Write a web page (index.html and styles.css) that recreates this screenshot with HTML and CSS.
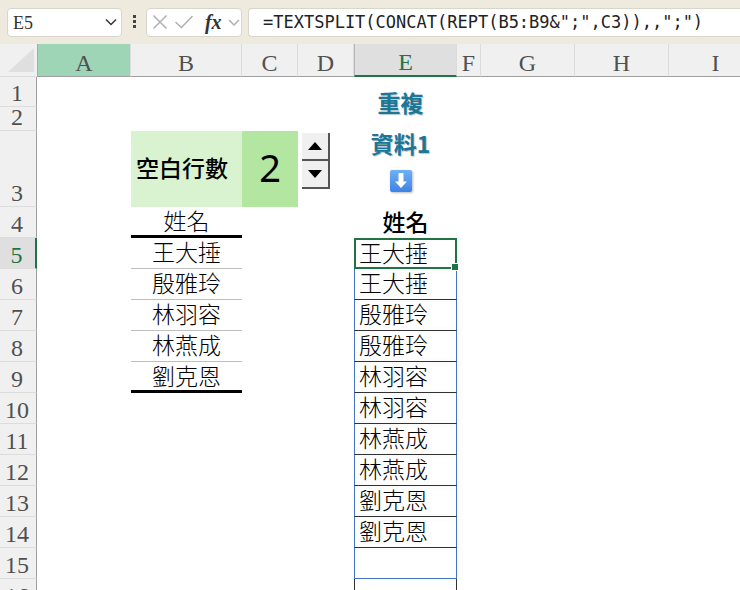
FILE: index.html
```
<!DOCTYPE html>
<html lang="zh-Hant">

<head>
    <meta charset="UTF-8">
    <meta name="viewport" content="width=device-width, initial-scale=1.0">
    <title>TEXTSPLIT</title>
    <link rel="stylesheet" href="styles.css">
</head>

<body>
    <div class="formula-bar">
        <div class="box name-box">
            <input type="text" value="E5" aria-label="Name box">
            <button type="button" aria-label="Names">
                <svg width="14" height="14" viewBox="0 0 14 14"><path d="M2 4.500l5 5 5-5" /></svg>
            </button>
        </div>
        <svg class="dots" width="4" height="16" viewBox="0 0 4 16">
            <rect x="0" y="1" width="3" height="3" />
            <rect x="0" y="6" width="3" height="3" />
            <rect x="0" y="11" width="3" height="3" />
        </svg>
        <div class="box tools">
            <button type="button" aria-label="Cancel">
                <svg width="16" height="16" viewBox="0 0 16 16"><path d="M1.500 1.500l13 13M14.500 1.500l-13 13" /></svg>
            </button>
            <button type="button" aria-label="Enter">
                <svg width="20" height="16" viewBox="0 0 20 16"><path d="M1.500 8l6 5.500L18.500 2" /></svg>
            </button>
            <button type="button" class="fx" aria-label="Insert function">fx</button>
            <button type="button" aria-label="More functions">
                <svg width="12" height="14" viewBox="0 0 12 14"><path d="M1 5l5 5 5-5" /></svg>
            </button>
        </div>
        <input type="text" class="box formula" aria-label="Formula" value="=TEXTSPLIT(CONCAT(REPT(B5:B9&amp;&quot;;&quot;,C3)),,&quot;;&quot;)">
    </div>

    <div class="sheet">
        <table>
            <colgroup>
                <col class="col-num">
                <col class="col-wide">
                <col class="col-b">
                <col class="col-c">
                <col class="col-c">
                <col class="col-e">
                <col class="col-f">
                <col class="col-wide">
                <col class="col-wide">
                <col class="col-wide">
            </colgroup>
            <thead>
                <tr>
                    <th class="corner"><svg width="26" height="24" viewBox="0 0 26 24"><path d="M26 0v24H0z" /></svg></th>
                    <th class="green">A</th>
                    <th>B</th>
                    <th>C</th>
                    <th>D</th>
                    <th class="active">E</th>
                    <th>F</th>
                    <th>G</th>
                    <th>H</th>
                    <th>I</th>
                </tr>
            </thead>
            <tbody>
                <tr class="row-1">
                    <th>1</th>
                    <td></td><td></td><td></td><td></td>
                    <td class="title" rowspan="3">
                        <p>重複</p>
                        <p>資料1</p>
                        <svg width="24" height="24" viewBox="0 0 24 24">
                            <defs>
                                <linearGradient id="blue" x1="0" y1="0" x2="0" y2="1">
                                    <stop offset="0" stop-color="#6fb0f5" />
                                    <stop offset="1" stop-color="#3d83e6" />
                                </linearGradient>
                            </defs>
                            <rect x="1" y="1" width="22" height="22" rx="2" fill="url(#blue)" />
                            <path d="M9.500 5q0-1 1-1h3q1 0 1 1v7.500h3.500L12 19l-6-6.500h3.500z" fill="#fff" />
                        </svg>
                    </td>
                </tr>
                <tr class="row-2"><th>2</th></tr>
                <tr class="row-3">
                    <th>3</th>
                    <td></td>
                    <td class="label">空白行數</td>
                    <td class="count">2</td>
                    <td class="spin">
                        <button type="button" aria-label="Increase"><svg width="14" height="8" viewBox="0 0 14 8"><path d="M7 0l7 8H0z" /></svg></button>
                        <button type="button" aria-label="Decrease"><svg width="14" height="8" viewBox="0 0 14 8"><path d="M7 8L0 0h14z" /></svg></button>
                    </td>
                </tr>
                <tr><th>4</th><td></td><td class="name head">姓名</td><td></td><td></td><td class="result-head">姓名</td></tr>
                <tr><th class="active">5</th><td></td><td class="name">王大捶</td><td></td><td></td><td class="result selected">王大捶</td></tr>
                <tr><th>6</th><td></td><td class="name">殷雅玲</td><td></td><td></td><td class="result">王大捶</td></tr>
                <tr><th>7</th><td></td><td class="name">林羽容</td><td></td><td></td><td class="result">殷雅玲</td></tr>
                <tr><th>8</th><td></td><td class="name">林燕成</td><td></td><td></td><td class="result">殷雅玲</td></tr>
                <tr><th>9</th><td></td><td class="name last">劉克恩</td><td></td><td></td><td class="result">林羽容</td></tr>
                <tr><th>10</th><td></td><td></td><td></td><td></td><td class="result">林羽容</td></tr>
                <tr><th>11</th><td></td><td></td><td></td><td></td><td class="result">林燕成</td></tr>
                <tr><th>12</th><td></td><td></td><td></td><td></td><td class="result">林燕成</td></tr>
                <tr><th>13</th><td></td><td></td><td></td><td></td><td class="result">劉克恩</td></tr>
                <tr><th>14</th><td></td><td></td><td></td><td></td><td class="result">劉克恩</td></tr>
                <tr><th>15</th><td></td><td></td><td></td><td></td><td class="result end"></td></tr>
                <tr><th>16</th><td></td><td></td><td></td><td></td><td class="after"></td></tr>
            </tbody>
        </table>
    </div>
</body>

</html>
```
FILE: styles.css
```
* {
    box-sizing: border-box;
}

body {
    margin: 0;
    height: 100vh;
    display: flex;
    flex-direction: column;
    overflow: hidden;
    background-color: #fff;
    font-family: "Noto Sans CJK TC", "Noto Sans", sans-serif;
    color: #000;
}

button,
input {
    margin: 0;
    padding: 0;
    border: none;
    background: none;
    font: inherit;
    color: inherit;
}

svg {
    display: block;
}

/* formula bar */
.formula-bar {
    flex: none;
    display: flex;
    align-items: center;
    height: 44px;
    padding-left: 7px;
    background-color: #eeeade;
}

.box {
    height: 29px;
    border: 1px solid #d8d5cc;
    border-radius: 4px;
    background-color: #fff;
}

.box path {
    fill: none;
    stroke: #b0b0b0;
    stroke-width: 1.5;
}

.name-box {
    display: flex;
    align-items: center;
    width: 115px;
    padding: 0 3px 0 5px;
}

.name-box input {
    flex: 1;
    min-width: 0;
    padding-top: 2px;
    font-family: "Liberation Serif", serif;
    font-size: 18px;
    color: #333;
}

.name-box path {
    stroke: #333;
}

.dots {
    margin: 0 9px 0 11px;
    fill: #444;
}

.tools {
    display: flex;
    align-items: center;
    justify-content: space-between;
    width: 96px;
    padding: 0 1px 0 5px;
}

.tools .fx {
    padding-left: 4px;
    font-family: "Liberation Serif", serif;
    font-size: 20px;
    font-style: italic;
    font-weight: bold;
    line-height: 24px;
    color: #333;
}

.formula {
    flex: 1;
    min-width: 0;
    margin-left: 6px;
    padding-left: 14px;
    border-right: none;
    border-radius: 4px 0 0 4px;
    font-family: "DejaVu Sans Mono", monospace;
    font-size: 17px;
    color: #222;
}

/* sheet */
.sheet {
    flex: 1;
    min-height: 0;
    overflow: hidden;
}

table {
    width: 763px;
    table-layout: fixed;
    border-collapse: separate;
    border-spacing: 0;
}

.col-num { width: 37px; }
.col-wide { width: 94px; }
.col-b { width: 111px; }
.col-c { width: 56px; }
.col-e { width: 103px; }
.col-f { width: 24px; }

tr {
    height: 31px;
}

th,
td {
    padding: 0;
}

th {
    background-color: #f0f0f0;
    font-family: "Liberation Serif", serif;
    font-size: 24px;
    font-weight: normal;
    line-height: 24px;
    color: #505050;
}

thead th {
    height: 33px;
    padding-top: 5px;
    border-right: 1px solid #dcdcdc;
    border-bottom: 1px solid #a0a0a0;
}

thead .green {
    background-color: #9fd5b7;
    border-left: 1px solid #86bd9f;
}

thead .active {
    background-color: #dfdfdf;
    border-bottom: 2px solid #217346;
    border-left: 1px solid #b5b5b5;
    color: #217346;
}

thead .corner {
    padding: 0 2px 0 8px;
    border-right: none;
    border-bottom-color: #dcdcdc;
}

.corner path {
    fill: #dfdfdf;
}

tbody th {
    padding-right: 2px;
    padding-bottom: 2px;
    border-right: 1px solid #a0a0a0;
    border-bottom: 1px solid #dcdcdc;
    line-height: 21px;
    vertical-align: bottom;
}

tbody .active {
    border-right: 2px solid #217346;
    background-color: #dfdfdf;
    color: #217346;
}

.row-1 { height: 30px; }
.row-2 { height: 24px; }
.row-3 { height: 76px; }

.title {
    padding-top: 5px;
    padding-right: 10px;
    vertical-align: top;
    font-size: 23px;
    font-weight: bold;
    line-height: 41px;
    text-align: center;
    color: #1c7696;
    text-shadow: 1px 1px 1px #b5c5cc;
}

.title p {
    margin: 0;
}

.title svg {
    margin: 5px auto 0;
    filter: drop-shadow(1px 1px 1px #bbb);
}

.label,
.name,
.result,
.result-head {
    padding-bottom: 4px;
    font-size: 23px;
    line-height: 24px;
    white-space: nowrap;
}

.label {
    padding-left: 5px;
    background-color: #d9f2d0;
    font-weight: 500;
}

.count {
    padding-bottom: 4px;
    background-color: #b3e6a1;
    font-family: "Noto Sans", sans-serif;
    font-size: 38px;
    font-weight: 400;
    line-height: 52px;
    text-align: center;
}

.spin {
    padding: 2px 0 0 4px;
    vertical-align: top;
}

.spin button {
    display: flex;
    align-items: center;
    justify-content: center;
    width: 28px;
    height: 28px;
    border-right: 2px solid #555;
    border-bottom: 2px solid #555;
    background-color: #f0f0f0;
}

.name,
.result {
    font-weight: 300;
}

.name {
    border-bottom: 1px solid #bfbfbf;
    text-align: center;
}

.name.head,
.name.last {
    padding-bottom: 2px;
    border-bottom: 3px solid #000;
}

.result-head {
    font-weight: 500;
    text-align: center;
}

.result {
    padding-left: 4px;
    border-right: 1px solid #4472c4;
    border-bottom: 1px solid #333;
    border-left: 1px solid #4472c4;
    box-shadow: 2px 0 8px rgba(0, 0, 0, 0.04);
}

.result.selected {
    position: relative;
    padding-left: 3px;
    padding-bottom: 3px;
    border: 2px solid #217346;
}

/* fill handle */
.selected::after {
    content: "";
    position: absolute;
    right: -4px;
    bottom: -4px;
    width: 6px;
    height: 6px;
    border: 1px solid #fff;
    background-color: #217346;
}

.result.end {
    border-bottom-color: #4472c4;
}

.after {
    border-right: 1px solid #333;
    border-left: 1px solid #333;
}
```
